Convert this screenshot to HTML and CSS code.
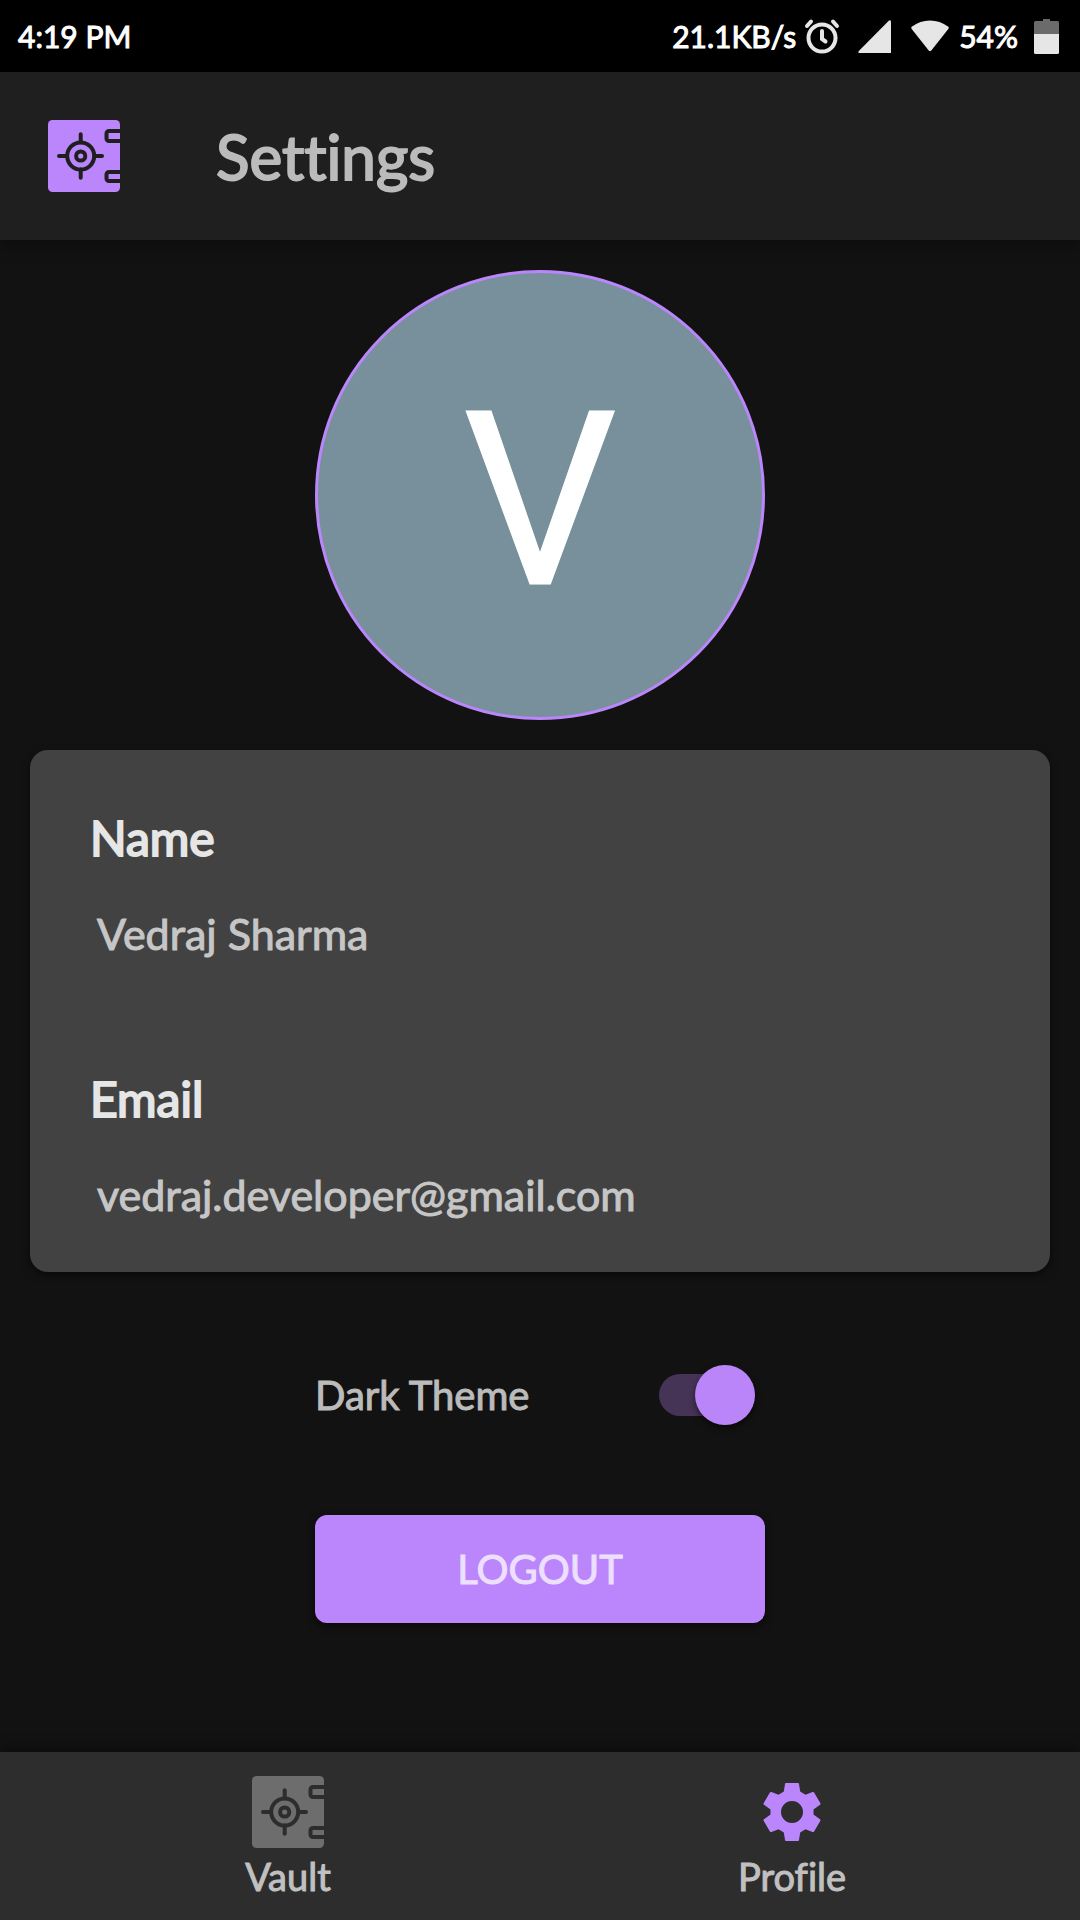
FILE: index.html
```html
<!DOCTYPE html>
<html lang="en">
<head>
<meta charset="utf-8">
<meta name="viewport" content="width=device-width, initial-scale=1">
<title>Settings</title>
<link rel="stylesheet" href="styles.css">
</head>
<body>
<svg class="defs" aria-hidden="true">
  <symbol id="vault" viewBox="0 0 72 72">
    <rect width="72" height="72" rx="4.5" fill="currentColor"/>
    <g class="vault-lines">
      <circle cx="32.7" cy="36" r="13.5"/>
      <circle cx="32.7" cy="36" r="4.6"/>
      <path d="M32.7 14.3v8M32.7 49.500v8.200M11 36h8M46.500 36h7.500" stroke-linecap="round"/>
      <path d="M72 11H61a2.500 2.500 0 0 0-2.500 2.500v5A2.500 2.500 0 0 0 61 21h11M72 52H61a2.500 2.500 0 0 0-2.500 2.500v4A2.500 2.500 0 0 0 61 61h11"/>
    </g>
  </symbol>
</svg>
<div class="screen">
  <div class="status-bar">
    <span class="clock">4:19 PM</span>
    <span class="rate">21.1KB/s</span>
    <svg class="alarm" viewBox="0 0 36 36" width="36" height="36" aria-hidden="true">
      <g fill="none" stroke="#e6e6e6" stroke-width="4" stroke-linecap="round"><circle cx="18" cy="20" r="13.500"/><path d="M3 8l4-4.500M33 8l-4-4.500"/><path d="M18 13v8l3.500 2.500"/></g>
    </svg>
    <svg class="signal" viewBox="0 0 33 33" width="33" height="33" aria-hidden="true"><path d="M31 .5Q33-.5 33 2v31H1.500Q-.5 33 .8 31z" fill="#e6e6e6"/></svg>
    <svg class="wifi" viewBox="0 0 38 32" width="38" height="32" aria-hidden="true"><path d="M.7 9Q-.3 7.500 1 6.500Q9 .5 19 .5T37 6.500Q38.300 7.500 37.300 9L20.300 30.500Q19 32 17.700 30.500z" fill="#e6e6e6"/></svg>
    <span class="percent">54%</span>
    <svg class="battery" viewBox="0 0 25 35" width="25" height="35" aria-hidden="true"><path d="M9 0h7v2h7.500Q25 2 25 3.500V15H0V3.500Q0 2 1.500 2H9z" fill="#6b6b6b"/><path d="M0 15h25v18.500Q25 35 23.500 35h-22Q0 35 0 33.500z" fill="#e6e6e6"/></svg>
  </div>
  <header class="app-bar">
    <svg class="icon logo" aria-hidden="true"><use href="#vault"/></svg>
    <h1>Settings</h1>
  </header>
  <main>
    <div class="avatar">V</div>
    <dl class="card">
      <dt>Name</dt>
      <dd>Vedraj Sharma</dd>
      <dt>Email</dt>
      <dd>vedraj.developer@gmail.com</dd>
    </dl>
    <div class="theme-row">
      <label for="dark-theme">Dark Theme</label>
      <input class="switch" type="checkbox" role="switch" id="dark-theme" checked>
    </div>
    <button class="logout" type="button">LOGOUT</button>
  </main>
  <nav class="bottom-nav">
    <a href="#vault-page">
      <svg class="icon vault-tab" aria-hidden="true"><use href="#vault"/></svg>
      Vault
    </a>
    <a href="#profile" aria-current="page">
      <svg class="icon" viewBox="0 0 72 72" aria-hidden="true"><path fill="#bb86fc" fill-rule="evenodd" d="M30 7h12q1 0 1 1l1.200 7.500 5.300 3.300 7-2.800q1-.4 1.600.6l6.300 10.600q.5 1-.4 1.600l-6.500 4.700v5l6.500 4.700q.9.600.4 1.600l-6.300 10.600q-.6 1-1.600.6l-7-2.800-5.300 3.300L43 64q0 1-1 1H30q-1 0-1-1l-1.200-7.500-5.300-3.300-7 2.800q-1 .4-1.600-.6L7.600 44.800q-.5-1 .4-1.600l6.500-4.700v-5L8 28.800q-.9-.6-.4-1.600l6.300-10.600q.6-1 1.600-.6l7 2.800 5.300-3.300L29 8q0-1 1-1zM36 25a11 11 0 1 0 0 22 11 11 0 0 0 0-22z"/></svg>
      Profile
    </a>
  </nav>
</div>
</body>
</html>
```
FILE: styles.css
```css
* { box-sizing: border-box; }
body {
  margin: 0;
  background: #121212;
  color: #bbb;
  font-family: Lato, "Noto Sans", sans-serif;
  font-variant-ligatures: none;
  -webkit-text-stroke: 1px;
}
.defs { position: absolute; width: 0; height: 0; }
.screen { min-height: 100vh; display: flex; flex-direction: column; }

.status-bar {
  display: flex;
  align-items: center;
  height: 72px;
  padding: 0 21px 0 18px;
  background: #000;
  color: #fff;
  font-size: 30px;
}
.rate { margin-left: auto; }
.alarm { margin-left: 8px; }
.signal { margin-left: 18px; }
.wifi { margin-left: 20px; }
.percent { margin-left: 10px; }
.battery { margin-left: 16px; }

.icon { width: 72px; height: 72px; }
.vault-lines { fill: none; stroke: var(--line); stroke-width: 4; }
.app-bar {
  position: relative;
  display: flex;
  align-items: center;
  gap: 96px;
  height: 168px;
  padding: 0 48px;
  background: #1f1f1f;
  box-shadow: 0 4px 16px #0006;
}
.logo { color: #bb86fc; --line: #1f1f1f; }
h1 { margin: 0; font-size: 62px; font-weight: 400; -webkit-text-stroke: 2px; }

main {
  flex: 1;
  display: flex;
  flex-direction: column;
  align-items: center;
  padding: 30px;
}
.avatar {
  display: grid;
  place-items: center;
  width: 450px;
  height: 450px;
  padding-top: 12px;
  border: 3px solid #bb86fc;
  border-radius: 50%;
  background: #78909c;
  color: #fff;
  font: 400 243px/1 Roboto, sans-serif;
}
.card {
  align-self: stretch;
  margin: 30px 0 0;
  padding: 52px 60px 41px;
  border-radius: 18px;
  background: #424242;
  box-shadow: 0 3px 8px #0008;
}
dt { color: #e6e6e6; font-size: 48px; line-height: 72px; -webkit-text-stroke: 2px; }
dd { margin: 24px 0 0; padding-left: 7px; color: #c6c6c6; font-size: 43px; line-height: 72px; }
dd + dt { margin-top: 93px; }

.theme-row {
  display: flex;
  justify-content: space-between;
  align-items: center;
  width: 450px;
  margin-top: 84px;
  padding-right: 10px;
  font-size: 40px;
  line-height: 78px;
}
.switch {
  appearance: none;
  display: grid;
  align-items: center;
  width: 96px;
  height: 60px;
  margin: 0;
}
.switch::before,
.switch::after { content: ""; grid-area: 1 / 1; }
.switch::before { height: 42px; border-radius: 21px; background: #463457; }
.switch::after {
  width: 60px;
  height: 60px;
  border-radius: 50%;
  background: #b985f8;
  box-shadow: 0 3px 6px #0008;
}
.switch:checked::after { justify-self: end; }
.logout {
  width: 450px;
  height: 108px;
  margin-top: 81px;
  border: 0;
  border-radius: 12px;
  background: #bb86fc;
  box-shadow: 0 3px 8px #0008;
  color: #eddffe;
  font: inherit;
  font-size: 40px;
}

.bottom-nav {
  display: flex;
  justify-content: center;
  height: 168px;
  background: #2d2d2d;
  box-shadow: 0 -4px 12px #0006;
}
.bottom-nav a {
  flex: 0 1 504px;
  display: flex;
  flex-direction: column;
  align-items: center;
  padding-top: 24px;
  color: #c0c0c0;
  font-size: 38px;
  line-height: 56px;
  text-decoration: none;
}
.vault-tab { color: #6d6d6d; --line: #2d2d2d; }
```
